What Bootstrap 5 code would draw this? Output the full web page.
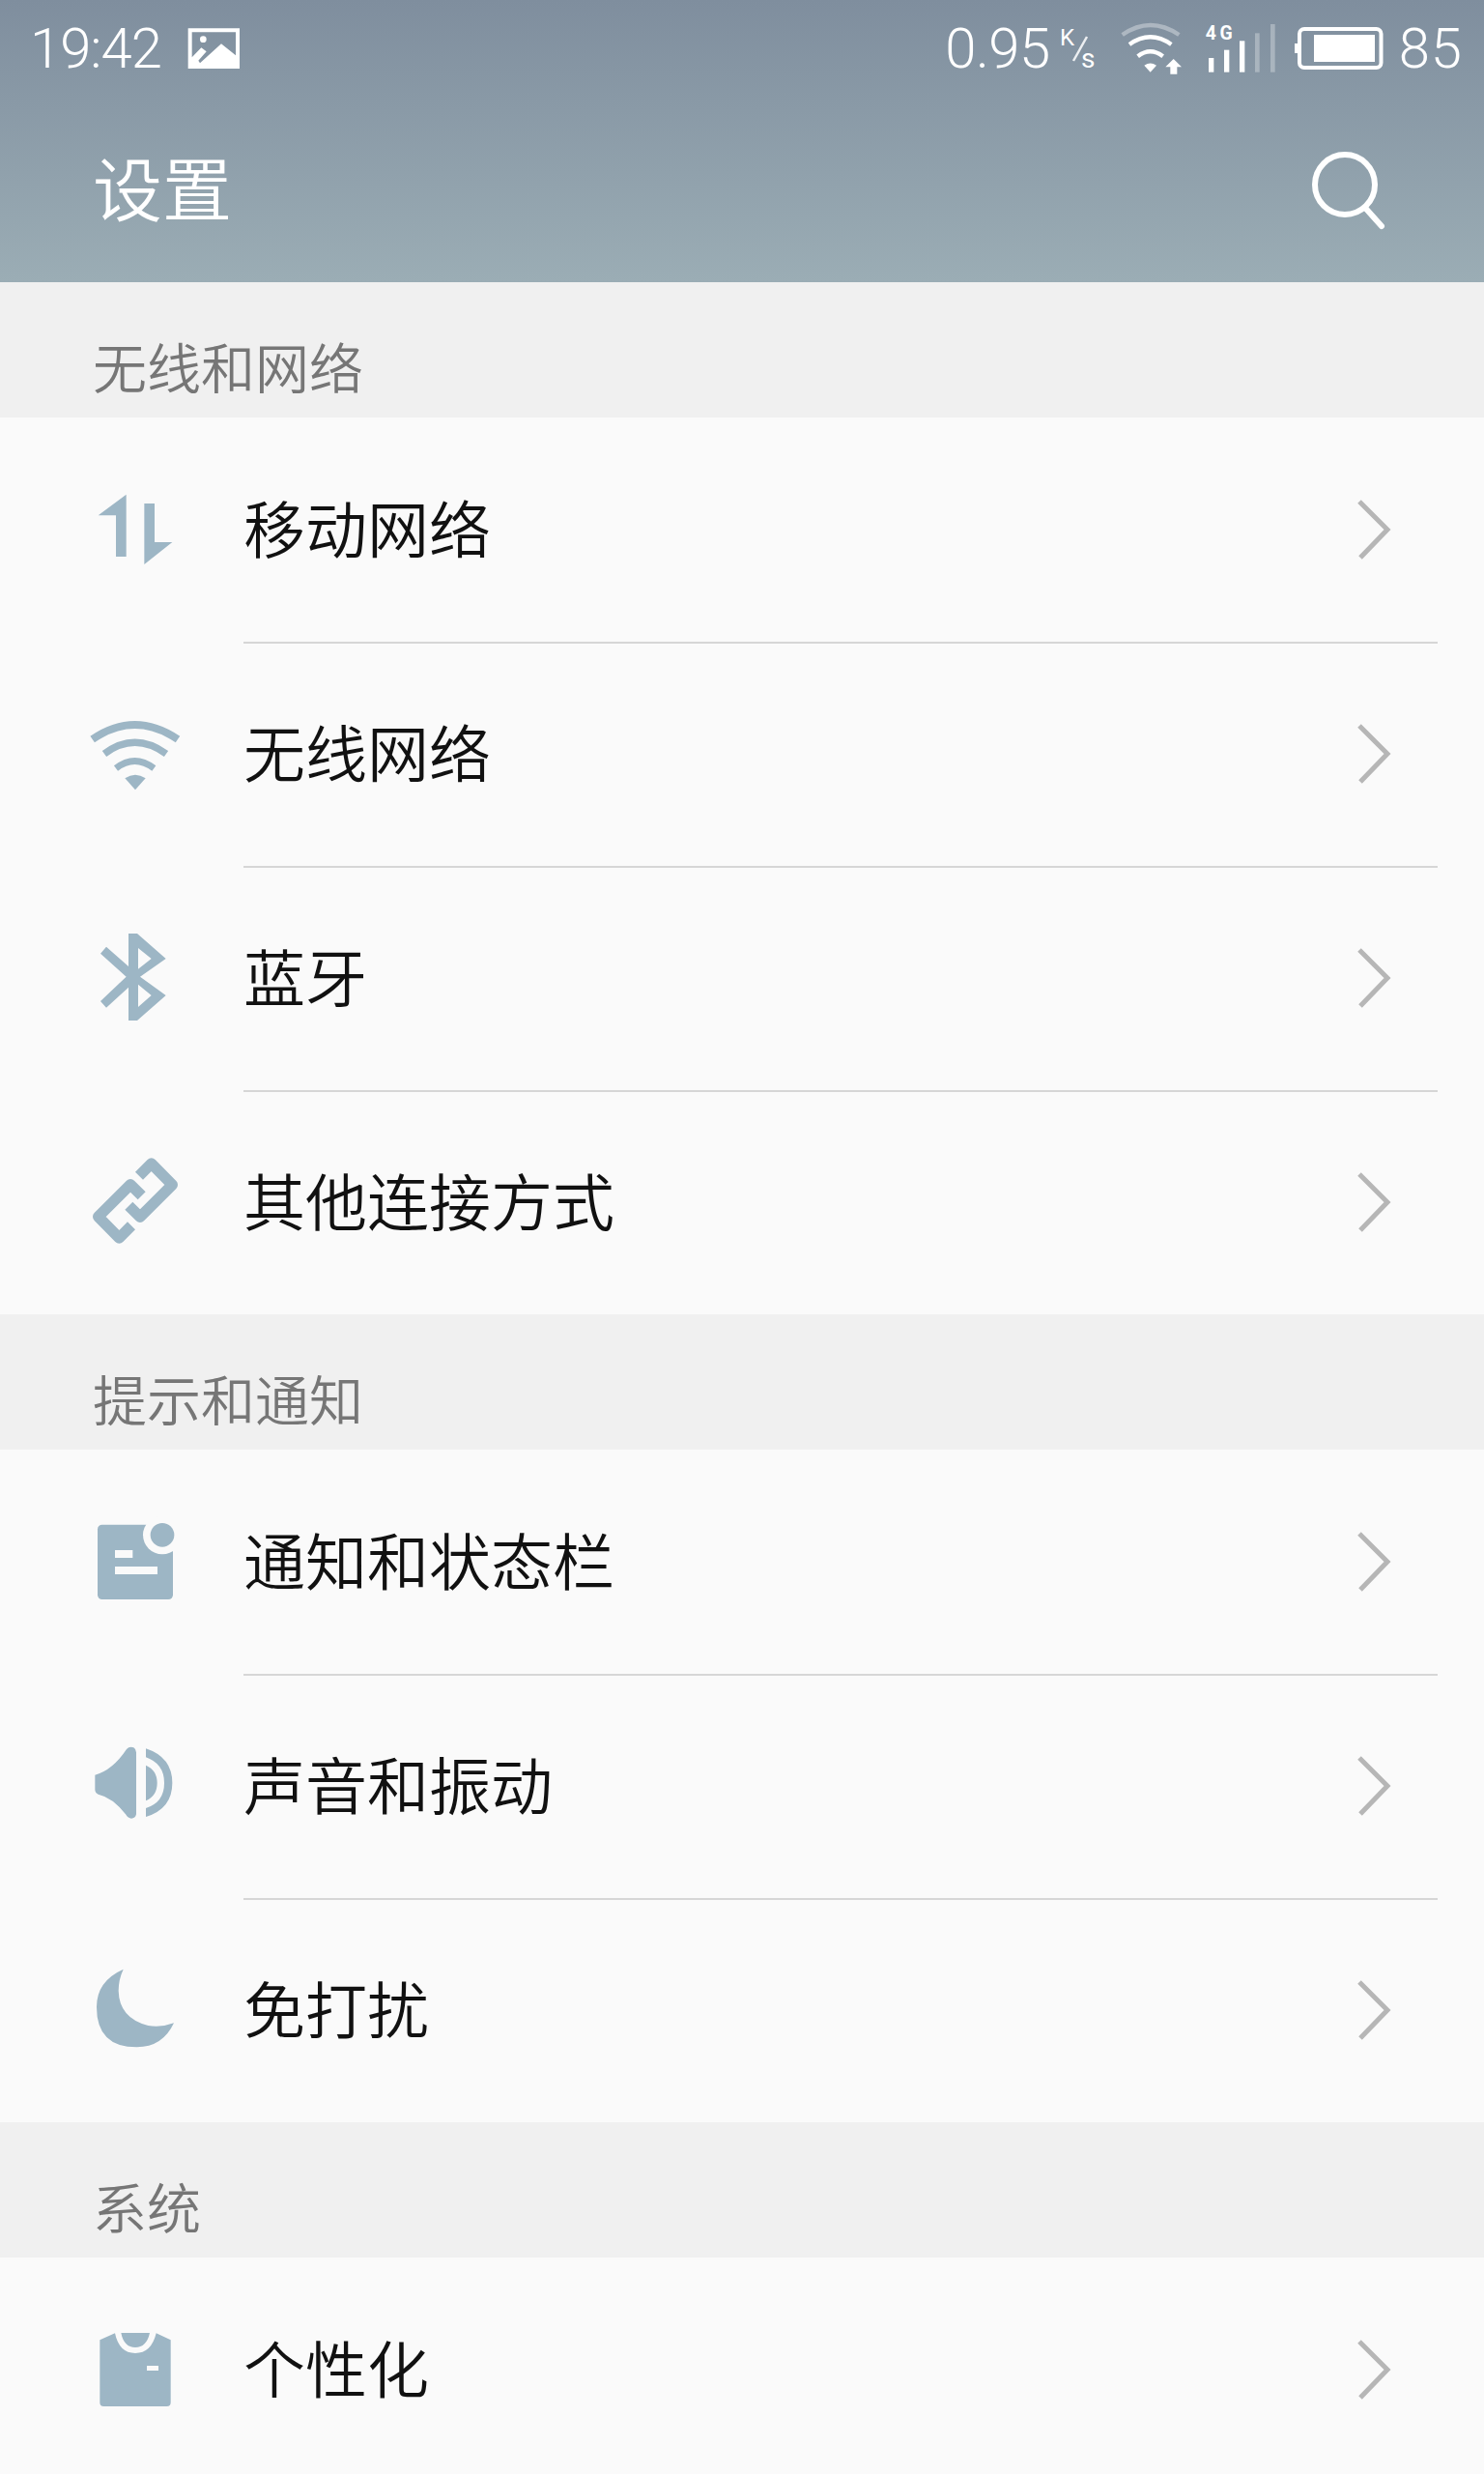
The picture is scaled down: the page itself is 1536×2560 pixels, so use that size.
<!DOCTYPE html>
<html lang="zh-CN">
<head>
  <meta charset="UTF-8">
  <title>设置</title>
  <link href="https://cdn.jsdelivr.net/npm/bootstrap@5.3.2/dist/css/bootstrap.min.css" rel="stylesheet">
  <style>
    body { background: #fafafa; font-family: "Noto Sans CJK SC", sans-serif; font-weight: 350; }
    .phone { height: 2560px; overflow: hidden; }
    .top-area { height: 292px; background: linear-gradient(180deg, #7f8e9e 0%, #9badb5 100%); color: #fff; }
    .status-row { height: 100px; padding: 0 22px 0 31px; font-family: Roboto, sans-serif; font-weight: 300; font-size: 58px; line-height: 1; }
    .status-time { letter-spacing: -1px; margin-right: 14px; }
    .status-speed { letter-spacing: -.5px; margin-right: 4px; }
    .status-batt { letter-spacing: 1px; margin-left: 16px; }
    .batt-ic { margin-left: 11px; }
    .tool-row { height: 192px; padding: 0 96px 0 96px; }
    .page-title { font-size: 72px; font-weight: 350; line-height: 1; margin: 0 0 8px; }
    .search-ic { margin-bottom: 4px; }
    .group-head { height: 140px; padding: 58px 0 0 96px; background: #f0f0f0; color: #767676; font-size: 56px; line-height: 56px; }
    .set-row { height: 232px; background: #fafafa; border: 0; border-radius: 0 !important; padding: 0; }
    .row-body { height: 232px; margin-right: 48px; padding-right: 50px; border-top: 2px solid transparent; font-size: 64px; line-height: 64px; color: #111; }
    .set-row + .set-row .row-body { border-top-color: #d6d6d6; }
    .row-text { margin-bottom: 11px; }
    .row-chev { margin-right: -5px; }
    .row-icon { width: 180px; height: 232px; margin-left: 60px; margin-right: 12px; flex: none; }
    .row-icon .ic { fill: #9db6c5; }
    .row-icon .ic-line { fill: none; stroke: #9db6c5; }
    .row-icon .ic-bg { fill: #fafafa; }
  </style>
</head>
<body>
  <div class="phone">

    <!-- Status bar and title -->
    <div class="top-area">
      <div class="status-row d-flex align-items-center">
        <span class="status-time">19:42</span>
        <svg width="80" height="60" viewBox="0 0 240 180">
          <path fill="#fff" fill-rule="evenodd" d="M41 28H201V153H41ZM53 40H189V112L144 76L78 136L73 128L98 100L82 88L53 118Z"/>
          <circle cx="88" cy="62" r="10" fill="#fff"/>
        </svg>
        <span class="status-speed ms-auto">0.95</span>
        <svg width="50" height="60" viewBox="1090 20 50 60">
          <text x="1096" y="47" fill="#fff" font-family="Roboto, sans-serif" font-size="24" font-weight="400">K</text>
          <line x1="1124" y1="38" x2="1110" y2="63" stroke="#fff" stroke-width="2.5" opacity=".85"/>
          <text x="1118" y="70" fill="#fff" font-family="Roboto, sans-serif" font-size="28" font-weight="400">s</text>
        </svg>
        <svg class="ms-2" width="180" height="80" viewBox="0 0 540 240" fill="none" stroke="#fff">
          <path d="M38 78Q125 18 214 78" stroke-width="13" opacity=".35"/>
          <path d="M60 108Q125 62 190 108" stroke-width="13"/>
          <path d="M86 145Q125 115 164 145" stroke-width="13"/>
          <path d="M106 173Q125 160 144 173L125 194Z" fill="#fff" stroke="none"/>
          <path d="M197 153L222 178H208V200H187V178H172Z" fill="#fff" stroke="none"/>
          <text x="296" y="93" fill="#fff" stroke="none" font-family="Roboto, sans-serif" font-size="58" font-weight="700" textLength="84">4G</text>
          <g fill="#fff" stroke="none">
            <rect x="306" y="150" width="16" height="44"/>
            <rect x="354" y="125" width="16" height="69"/>
            <rect x="402" y="97" width="16" height="97"/>
            <rect x="450" y="73" width="14" height="121" opacity=".3"/>
            <rect x="498" y="45" width="14" height="149" opacity=".3"/>
          </g>
        </svg>
        <svg class="batt-ic" width="92" height="44" viewBox="1341 28 92 44">
          <rect x="1341" y="45" width="5" height="10" fill="#fff"/>
          <rect x="1346" y="30" width="84.500" height="40" rx="5" fill="none" stroke="#fff" stroke-width="4"/>
          <rect x="1361" y="36" width="63" height="28" fill="#fff"/>
        </svg>
        <span class="status-batt">85</span>
      </div>
      <div class="tool-row d-flex align-items-center justify-content-between">
        <h1 class="page-title">设置</h1>
        <svg class="search-ic" width="90" height="90" viewBox="0 0 90 90" fill="none" stroke="#fff" stroke-width="6" stroke-linecap="round">
          <circle cx="42" cy="42" r="31"/>
          <line x1="63" y1="66" x2="80" y2="85"/>
        </svg>
      </div>
    </div>

    <!-- Wireless and networks -->
    <div class="group-head">无线和网络</div>
    <ul class="list-group list-group-flush">
      <li class="list-group-item set-row d-flex align-items-center">
        <svg class="row-icon" viewBox="0 -144 540 696"><path class="ic" d="M212 95L125 160H180V288H212ZM268 123H300V243H355L268 312Z"/></svg>
        <div class="row-body flex-grow-1 d-flex align-items-center justify-content-between"><span class="row-text">移动网络</span>
          <svg class="row-chev" width="40" height="70" viewBox="0 0 40 70" fill="none" stroke="#b6b6b6" stroke-width="5"><path d="M4 5L33 34L5 63"/></svg></div>
      </li>
      <li class="list-group-item set-row d-flex align-items-center">
        <svg class="row-icon" viewBox="0 552 540 696">
          <g class="ic-line"><path stroke-width="24" d="M107 855Q238 765 372 855"/><path stroke-width="22" d="M144 900Q238 830 336 900"/><path stroke-width="20" d="M180 945Q238 900 298 945"/></g>
          <path class="ic" d="M208 976Q240 955 272 976L240 1012Z"/></svg>
        <div class="row-body flex-grow-1 d-flex align-items-center justify-content-between"><span class="row-text">无线网络</span>
          <svg class="row-chev" width="40" height="70" viewBox="0 0 40 70" fill="none" stroke="#b6b6b6" stroke-width="5"><path d="M4 5L33 34L5 63"/></svg></div>
      </li>
      <li class="list-group-item set-row d-flex align-items-center">
        <svg class="row-icon" viewBox="0 -72 540 696"><path class="ic" fill-rule="evenodd" d="M219 138H246L335 216L255 272L335 330L246 408H219V305L150 368L132 348L212 272L132 200L150 179L219 240ZM249 183V248L290 216ZM249 296V366L290 330Z"/></svg>
        <div class="row-body flex-grow-1 d-flex align-items-center justify-content-between"><span class="row-text">蓝牙</span>
          <svg class="row-chev" width="40" height="70" viewBox="0 0 40 70" fill="none" stroke="#b6b6b6" stroke-width="5"><path d="M4 5L33 34L5 63"/></svg></div>
      </li>
      <li class="list-group-item set-row d-flex align-items-center">
        <svg class="row-icon" viewBox="0 -66 540 696"><g class="ic-line" stroke-width="34" stroke-linejoin="round"><path d="M252 200L290 162L355 228L255 328L220 293"/><path d="M228 355L190 393L125 327L225 227L260 262"/></g></svg>
        <div class="row-body flex-grow-1 d-flex align-items-center justify-content-between"><span class="row-text">其他连接方式</span>
          <svg class="row-chev" width="40" height="70" viewBox="0 0 40 70" fill="none" stroke="#b6b6b6" stroke-width="5"><path d="M4 5L33 34L5 63"/></svg></div>
      </li>
    </ul>

    <!-- Alerts and notifications -->
    <div class="group-head">提示和通知</div>
    <ul class="list-group list-group-flush">
      <li class="list-group-item set-row d-flex align-items-center">
        <svg class="row-icon" viewBox="0 -120 540 696">
          <rect class="ic" x="123" y="113" width="234" height="232" rx="14"/>
          <circle class="ic-bg" cx="324" cy="145" r="60"/>
          <circle class="ic" cx="324" cy="145" r="37"/>
          <rect class="ic-bg" x="177" y="192" width="55" height="24"/>
          <rect class="ic-bg" x="177" y="243" width="132" height="24"/></svg>
        <div class="row-body flex-grow-1 d-flex align-items-center justify-content-between"><span class="row-text">通知和状态栏</span>
          <svg class="row-chev" width="40" height="70" viewBox="0 0 40 70" fill="none" stroke="#b6b6b6" stroke-width="5"><path d="M4 5L33 34L5 63"/></svg></div>
      </li>
      <li class="list-group-item set-row d-flex align-items-center">
        <svg class="row-icon" viewBox="0 -174 540 696"><path class="ic" d="M115 140Q170 125 213 60Q222 50 235 55Q243 60 243 70V262Q240 275 228 275Q218 275 210 262Q170 210 125 200Q115 195 115 185ZM273 110Q308 125 308 165Q308 205 273 220ZM273 58Q355 85 355 165Q355 245 273 270V243Q330 225 330 165Q330 105 273 85Z"/></svg>
        <div class="row-body flex-grow-1 d-flex align-items-center justify-content-between"><span class="row-text">声音和振动</span>
          <svg class="row-chev" width="40" height="70" viewBox="0 0 40 70" fill="none" stroke="#b6b6b6" stroke-width="5"><path d="M4 5L33 34L5 63"/></svg></div>
      </li>
      <li class="list-group-item set-row d-flex align-items-center">
        <svg class="row-icon" viewBox="0 522 540 696"><path class="ic" d="M203 743Q120 780 120 860Q120 985 245 985Q325 985 360 910Q320 925 280 918Q190 895 188 810Q188 775 203 743Z"/></svg>
        <div class="row-body flex-grow-1 d-flex align-items-center justify-content-between"><span class="row-text">免打扰</span>
          <svg class="row-chev" width="40" height="70" viewBox="0 0 40 70" fill="none" stroke="#b6b6b6" stroke-width="5"><path d="M4 5L33 34L5 63"/></svg></div>
      </li>
    </ul>

    <!-- System -->
    <div class="group-head">系统</div>
    <ul class="list-group list-group-flush">
      <li class="list-group-item set-row d-flex align-items-center">
        <svg class="row-icon" viewBox="0 -132 540 696">
          <path class="ic" d="M130 124L177 103Q190 165 240 165Q290 165 305 103L350 124V318Q350 330 338 330H142Q130 330 130 318ZM196 102H285Q275 147 240 147Q205 147 196 102Z"/>
          <rect class="ic-bg" x="276" y="204" width="36" height="15"/></svg>
        <div class="row-body flex-grow-1 d-flex align-items-center justify-content-between"><span class="row-text">个性化</span>
          <svg class="row-chev" width="40" height="70" viewBox="0 0 40 70" fill="none" stroke="#b6b6b6" stroke-width="5"><path d="M4 5L33 34L5 63"/></svg></div>
      </li>
    </ul>

  </div>
  <script src="https://cdn.jsdelivr.net/npm/bootstrap@5.3.2/dist/js/bootstrap.bundle.min.js"></script>
</body>
</html>
